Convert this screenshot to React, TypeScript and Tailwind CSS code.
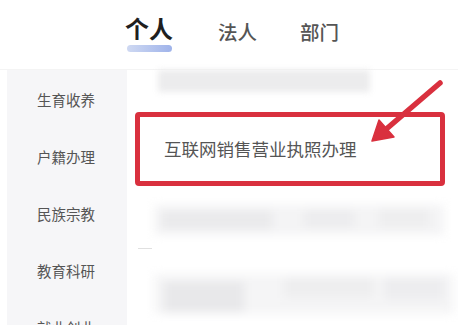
import React from "react";

const font = { fontFamily: '"Noto Sans CJK SC", "Noto Sans", sans-serif' };

export default function App() {
  const side = ["生育收养", "户籍办理", "民族宗教", "教育科研", "就业创业"];
  return (
    <div className="relative w-[458px] h-[325px] overflow-hidden bg-white" style={font}>
      {/* Tabs header */}
      <div className="h-[70px] flex items-start border-b border-[#f4f4f4]">
        <div className="ml-[125px] mt-[12px] flex flex-col items-start">
          <span className="text-[24px] leading-[32px] font-bold text-[#1f1f1f]">个人</span>
          <div className="mt-[1px] ml-[2px] w-[45px] h-[7px] rounded-full bg-gradient-to-r from-[#cfd9f2] to-[#9fb3ea]" />
        </div>
        <span className="ml-[45px] mt-[18px] text-[19.5px] leading-[28px] font-medium text-[#555]">法人</span>
        <span className="ml-[43px] mt-[18px] text-[19.5px] leading-[28px] font-medium text-[#555]">部门</span>
      </div>

      <div className="flex h-[255px]">
        {/* Sidebar */}
        <div className="ml-[7px] w-[120px] shrink-0 bg-[#f6f6f8] flex flex-col pt-[16px] overflow-hidden">
          {side.map((s) => (
            <div key={s} className="h-[57px] shrink-0 pl-[30px] flex items-start">
              <span className="text-[14.5px] leading-[28px] text-[#555]">{s}</span>
            </div>
          ))}
        </div>

        {/* Content */}
        <div className="flex-1 flex flex-col">
          <div className="ml-[31px] mt-[0px] w-[212px] h-[22px] bg-[#ececed] blur-[3px]" />
          <div className="ml-[8px] mt-[20px] w-[310px] h-[74px] border-[5px] border-[#d9303e] rounded-[4px] flex items-center pl-[24px]">
            <span className="text-[17.5px] leading-[24px] text-[#555]">互联网销售营业执照办理</span>
          </div>
          <div className="relative ml-[27px] mt-[19px] w-[290px] h-[30px] blur-[5px]">
            <div className="absolute inset-0 bg-[#f4f4f5]" />
            <div className="absolute left-[8px] top-[6px] w-[110px] h-[18px] bg-[#eaeaec]" />
            <div className="absolute left-[150px] top-[6px] w-[50px] h-[16px] bg-[#ececee]" />
            <div className="absolute left-[225px] top-[4px] w-[50px] h-[18px] bg-[#eeeeef]" />
          </div>
          <div className="ml-[11px] mt-[13px] w-[14px] h-[1px] bg-[#e0e0e0]" />
          <div className="relative ml-[27px] mt-[21px] w-[300px] h-[50px] blur-[5px]">
            <div className="absolute left-0 top-[4px] w-[300px] h-[40px] bg-[#f5f5f6]" />
            <div className="absolute left-[10px] top-[12px] w-[80px] h-[30px] bg-[#e8e8ea]" />
            <div className="absolute left-[130px] top-[8px] w-[90px] h-[20px] bg-[#eeeeef]" />
            <div className="absolute left-[230px] top-[8px] w-[60px] h-[22px] bg-[#ededef]" />
          </div>
        </div>
      </div>

      {/* Annotation arrow */}
      <svg className="absolute left-0 top-0 pointer-events-none" width="458" height="325">
        <line x1="440" y1="83" x2="384" y2="131" stroke="#d9303e" strokeWidth="5.5" strokeLinecap="round" />
        <polygon points="372,141 379,120 394,137" fill="#d9303e" stroke="#d9303e" strokeWidth="1.5" strokeLinejoin="round" />
      </svg>
    </div>
  );
}
